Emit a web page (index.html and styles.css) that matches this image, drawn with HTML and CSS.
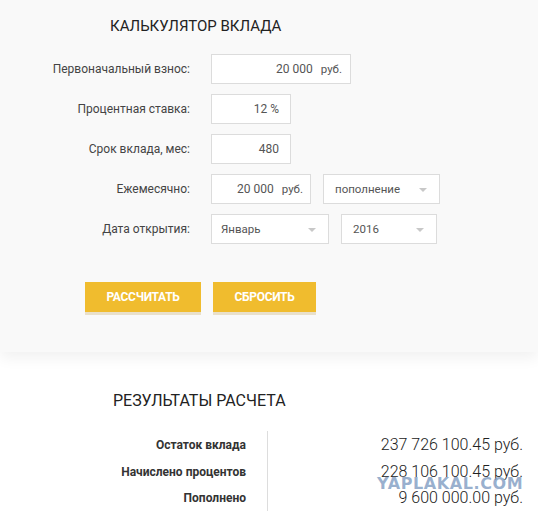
FILE: index.html
```html
<!DOCTYPE html>
<html lang="ru">
<head>
  <meta charset="UTF-8" />
  <meta name="viewport" content="width=device-width, initial-scale=1.0" />
  <title>Калькулятор вклада</title>
  <link rel="stylesheet" href="styles.css">
</head>
<body>
  <section class="calc">
    <h1>Калькулятор вклада</h1>

    <div class="form">
      <label>Первоначальный взнос:</label>
      <div class="controls">
        <div class="field field-wide">20 000<span class="unit">руб.</span></div>
      </div>

      <label>Процентная ставка:</label>
      <div class="controls">
        <div class="field field-short">12 %</div>
      </div>

      <label>Срок вклада, мес:</label>
      <div class="controls">
        <div class="field field-short">480</div>
      </div>

      <label>Ежемесячно:</label>
      <div class="controls">
        <div class="field field-mid">20 000<span class="unit">руб.</span></div>
        <div class="select select-type">пополнение</div>
      </div>

      <label>Дата открытия:</label>
      <div class="controls">
        <div class="select select-month">Январь</div>
        <div class="select select-year">2016</div>
      </div>
    </div>

    <div class="buttons">
      <button class="btn btn-calc">Рассчитать</button>
      <button class="btn btn-reset">Сбросить</button>
    </div>
  </section>

  <section class="results">
    <h2>Результаты расчета</h2>
    <div class="results-table">
      <ul class="results-labels">
        <li>Остаток вклада</li>
        <li>Начислено процентов</li>
        <li>Пополнено</li>
      </ul>
      <ul class="results-values">
        <li>237 726 100.45 руб.</li>
        <li>228 106 100.45 руб.</li>
        <li>9 600 000.00 руб.</li>
      </ul>
    </div>
    <div class="watermark">YAPLAKAL.COM</div>
  </section>
</body>
</html>
```

FILE: styles.css
```css
:root {
  --panel: #f9f9f9;
  --border: #dcdcdc;
  --text: #333;
  --muted: #555;
  --yellow: #f0bc2e;
}

* {
  box-sizing: border-box;
  margin: 0;
  padding: 0;
  font-family: Roboto, "Liberation Sans", sans-serif;
}

body {
  background: #fff;
  color: var(--text);
  overflow: hidden;
}

/* top panel with the form */
.calc {
  position: relative;
  z-index: 1;
  background: var(--panel);
  padding: 15px 0 40px;
  box-shadow: 0 6px 14px rgba(0, 0, 0, 0.06);
}

.calc h1 {
  font-size: 15px;
  font-weight: 400;
  line-height: 22px;
  text-transform: uppercase;
  color: #222;
  margin-left: 110px;
  margin-bottom: 17px;
}

.form {
  display: grid;
  grid-template-columns: 190px auto;
  column-gap: 21px;
  row-gap: 10px;
}

.form label {
  font-size: 12px;
  color: #444;
  text-align: right;
  line-height: 30px;
}

.controls {
  display: flex;
  gap: 12px;
}

.field,
.select {
  height: 30px;
  background: #fff;
  border: 1px solid var(--border);
  font-size: 12px;
  line-height: 28px;
  color: var(--muted);
}

.field {
  text-align: right;
  padding-right: 11px;
}

.field .unit {
  margin-left: 8px;
  font-size: 11.5px;
}

.field-wide {
  width: 140px;
  padding-right: 8px;
}

.field-short {
  width: 80px;
}

.field-mid {
  width: 100px;
  padding-right: 7px;
}

.select {
  position: relative;
  padding-left: 11px;
  font-size: 11.5px;
}

.select::after {
  content: "";
  position: absolute;
  right: 12px;
  top: 13px;
  border-left: 4px solid transparent;
  border-right: 4px solid transparent;
  border-top: 4px solid #c8c8c8;
}

.select-type {
  width: 117px;
}

.select-month {
  width: 118px;
  padding-left: 9px;
}

.select-year {
  width: 96px;
}

.buttons {
  display: flex;
  gap: 12px;
  margin: 38px 0 0 85px;
}

.btn {
  height: 30px;
  background: var(--yellow);
  border: none;
  color: #fff;
  font-size: 12px;
  font-weight: 700;
  text-transform: uppercase;
  letter-spacing: -0.3px;
  box-shadow: 0 3px 0 #e9e0cb;
  cursor: pointer;
}

.btn-calc {
  width: 116px;
}

.btn-reset {
  width: 103px;
}

/* results block */
.results {
  position: relative;
  padding-top: 39px;
}

.results h2 {
  font-size: 16px;
  font-weight: 400;
  line-height: 20px;
  text-transform: uppercase;
  color: #222;
  margin-left: 113px;
  margin-bottom: 20px;
}

.results-table {
  display: flex;
}

ul {
  list-style: none;
}

.results-table li {
  height: 26.5px;
  line-height: 28px;
}

.results-labels {
  width: 268px;
  padding-right: 21px;
  border-right: 1px solid #ddd;
  text-align: right;
  font-size: 12px;
  font-weight: 700;
  color: #333;
}

.results-values {
  flex: 1;
  padding-right: 15px;
  text-align: right;
  font-size: 16px;
  font-weight: 300;
  color: #222;
}

.watermark {
  position: absolute;
  left: 377px;
  top: 123px;
  font-family: "DejaVu Sans", sans-serif;
  font-size: 16px;
  font-weight: 700;
  line-height: 18px;
  color: rgba(120, 150, 190, 0.75);
  letter-spacing: 0.6px;
  text-shadow: 1px 1px 0 rgba(255, 255, 255, 0.6);
}
```
